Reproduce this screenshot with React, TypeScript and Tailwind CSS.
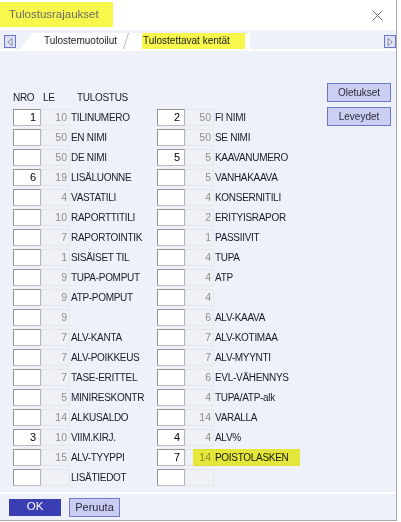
import React from "react";

type R = [string, string, string];

const left: R[] = [
  ["1", "10", "TILINUMERO"],
  ["", "50", "EN NIMI"],
  ["", "50", "DE NIMI"],
  ["6", "19", "LISÄLUONNE"],
  ["", "4", "VASTATILI"],
  ["", "10", "RAPORTTITILI"],
  ["", "7", "RAPORTOINTIK"],
  ["", "1", "SISÄISET TIL"],
  ["", "9", "TUPA-POMPUT"],
  ["", "9", "ATP-POMPUT"],
  ["", "9", ""],
  ["", "7", "ALV-KANTA"],
  ["", "7", "ALV-POIKKEUS"],
  ["", "7", "TASE-ERITTEL"],
  ["", "5", "MINIRESKONTR"],
  ["", "14", "ALKUSALDO"],
  ["3", "10", "VIIM.KIRJ."],
  ["", "15", "ALV-TYYPPI"],
  ["", "", "LISÄTIEDOT"],
];

const right: R[] = [
  ["2", "50", "FI NIMI"],
  ["", "50", "SE NIMI"],
  ["5", "5", "KAAVANUMERO"],
  ["", "5", "VANHAKAAVA"],
  ["", "4", "KONSERNITILI"],
  ["", "2", "ERITYISRAPOR"],
  ["", "1", "PASSIIVIT"],
  ["", "4", "TUPA"],
  ["", "4", "ATP"],
  ["", "4", ""],
  ["", "6", "ALV-KAAVA"],
  ["", "7", "ALV-KOTIMAA"],
  ["", "7", "ALV-MYYNTI"],
  ["", "6", "EVL-VÄHENNYS"],
  ["", "4", "TUPA/ATP-alk"],
  ["", "14", "VARALLA"],
  ["4", "4", "ALV%"],
  ["7", "14", "POISTOLASKEN"],
  ["", "", ""],
];

function Row({ r, hl }: { r: R; hl?: boolean }) {
  return (
    <div className="relative flex h-[17px] items-stretch">
      <div className="w-[28px] bg-white border border-[#b8b8b8] border-t-[#939393] border-l-[#939393] text-right pr-[4px] text-[11px] leading-[15px] text-black">
        {r[0]}
      </div>
      <div className="w-[29px] border border-[#e4e7ef] bg-[#eff1f7] text-right pr-[2px] text-[10.5px] leading-[15px] text-[#8c8c8c]">
        {r[1]}
      </div>
      <div className="w-[87px] pl-[1px] text-[10px] tracking-[-0.3px] leading-[17px] text-[#1a1a2a] whitespace-nowrap">
        {r[2]}
      </div>
      {hl && (
        <div className="absolute left-[36px] top-0 h-[17px] w-[107px] bg-[#f5f53c] mix-blend-multiply" />
      )}
    </div>
  );
}

function Arrow({ dir }: { dir: "l" | "r" }) {
  return (
    <div className="w-[12px] h-[13px] border border-[#6b74d4] bg-[#dde1f7] flex items-center justify-center">
      <svg width="6" height="8" viewBox="0 0 6 8">
        {dir === "l" ? (
          <path d="M5 0.5 L0.8 4 L5 7.5 Z" fill="#e8eaf6" stroke="#8a8a9a" strokeWidth="1" />
        ) : (
          <path d="M1 0.5 L5.2 4 L1 7.5 Z" fill="#e8eaf6" stroke="#8a8a9a" strokeWidth="1" />
        )}
      </svg>
    </div>
  );
}

export default function App() {
  return (
    <div className="w-[401px] h-[522px] bg-white flex font-['Liberation_Sans',Arial,sans-serif]">
      <div className="w-[397px] h-[521px] border-r border-b border-[#a8a8a8] flex flex-col bg-white">
        {/* Title bar */}
        <div className="h-[30px] flex items-start">
          <div className="mt-[2px] h-[25px] w-[113px] bg-[#f8f74c] pl-[9px] flex items-center text-[11.5px] text-[#6a6a6a]">
            Tulostusrajaukset
          </div>
          <div className="ml-auto mr-[13px] mt-[10px]">
            <svg width="11" height="11" viewBox="0 0 11 11">
              <path d="M0.5 0.5 L10.5 10.5 M10.5 0.5 L0.5 10.5" stroke="#6b6b6b" strokeWidth="1" />
            </svg>
          </div>
        </div>

        {/* Tab strip */}
        <div className="h-[19px] bg-[#eef1fa] flex items-start">
          <div className="ml-[4px] mt-[5px]">
            <Arrow dir="l" />
          </div>
          <div className="ml-[4px] mt-[3px] h-[16px] w-[230px] bg-white [clip-path:polygon(0_100%,13px_0,100%_0,100%_100%)] flex items-stretch pl-[24px]">
            <div className="w-[79px] text-[10px] leading-[16px] text-[#1a1a2a] whitespace-nowrap">
              Tulostemuotoilut
            </div>
            <svg width="6" height="16" viewBox="0 0 6 16">
              <path d="M0.5 16 L5.5 0" stroke="#b8b8c0" strokeWidth="1" />
            </svg>
            <div className="w-[13px]" />
            <div className="w-[103px] bg-[#f8f74c] pl-[1px] text-[10px] leading-[16px] text-[#1a1a2a] whitespace-nowrap">
              Tulostettavat kentät
            </div>
          </div>
          <div className="ml-auto mt-[5px]">
            <Arrow dir="r" />
          </div>
        </div>
        <div className="h-[2px] bg-white" />

        {/* Panel */}
        <div className="h-[441px] bg-[#eef1fa] flex items-start">
          <div className="pl-[13px] pt-[40px]">
            <div className="flex h-[12px] items-center text-[10px] tracking-[-0.3px] text-[#1a1a2a]">
              <div className="w-[30px]">NRO</div>
              <div className="w-[34px]">LE</div>
              <div>TULOSTUS</div>
            </div>
            <div className="mt-[6px] flex">
              <div className="w-[144px] flex flex-col gap-[3px]">
                {left.map((r, i) => (
                  <Row key={i} r={r} />
                ))}
              </div>
              <div className="w-[144px] flex flex-col gap-[3px]">
                {right.map((r, i) => (
                  <Row key={i} r={r} hl={i === 17} />
                ))}
              </div>
            </div>
          </div>
          <div className="ml-auto mr-[5px] pt-[32px] flex flex-col gap-[5px]">
            <div className="w-[64px] h-[19px] bg-[#cbcff2] border border-[#6c74cc] flex items-center justify-center text-[10px] text-[#2a2a3a]">
              Oletukset
            </div>
            <div className="w-[64px] h-[19px] bg-[#cbcff2] border border-[#6c74cc] flex items-center justify-center text-[10px] text-[#2a2a3a]">
              Leveydet
            </div>
          </div>
        </div>
        <div className="h-[2px] bg-white" />

        {/* Bottom bar */}
        <div className="h-[26px] bg-[#eef1fa] flex items-center pl-[9px] gap-[8px]">
          <div className="w-[52px] h-[17px] bg-[#3a3eb2] flex items-center justify-center text-[11.5px] text-white">
            OK
          </div>
          <div className="w-[51px] h-[19px] bg-[#c9cdf2] border border-[#737acb] flex items-center justify-center text-[11px] text-[#2a2a3a]">
            Peruuta
          </div>
        </div>
      </div>
    </div>
  );
}
